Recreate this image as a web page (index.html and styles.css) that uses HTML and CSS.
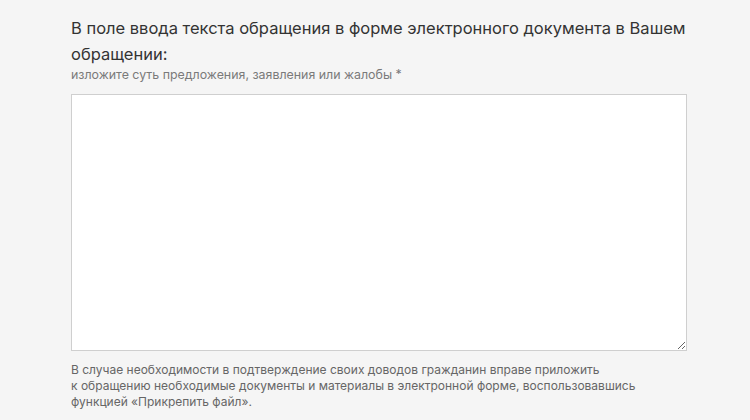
FILE: index.html
```html
<!DOCTYPE html>
<html lang="ru">
<head>
<meta charset="utf-8">
<link rel="stylesheet" href="styles.css">
</head>
<body>
<div class="form">
  <h2 class="title">В поле ввода текста обращения в форме электронного документа в Вашем обращении:</h2>
  <div class="hint">изложите суть предложения, заявления или жалобы *</div>
  <textarea class="area"></textarea>
  <p class="note">В случае необходимости в подтверждение своих доводов гражданин вправе приложить<br>к обращению необходимые документы и материалы в электронной форме, воспользовавшись<br>функцией «Прикрепить файл».</p>
</div>
</body>
</html>
```
FILE: styles.css
```css
html, body {
  margin: 0;
  padding: 0;
  background: #f5f5f5;
}
body {
  font-family: Inter, "Liberation Sans", Arial, sans-serif;
}
.form {
  width: 616px;
  margin-left: 71px;
  padding-top: 15px;
}
.title {
  margin: 0;
  font-size: 16.5px;
  font-weight: normal;
  line-height: 26px;
  color: #333;
}
.hint {
  margin-top: 0;
  font-size: 12.4px;
  line-height: 16px;
  color: #7a7a7a;
}
.area {
  display: block;
  box-sizing: border-box;
  width: 616px;
  height: 257px;
  margin-top: 11px;
  border: 1px solid #cfcfcf;
  background: #fff;
  resize: both;
}
.note {
  margin: 11px 0 0;
  font-size: 12px;
  line-height: 16px;
  color: #666;
}
```
